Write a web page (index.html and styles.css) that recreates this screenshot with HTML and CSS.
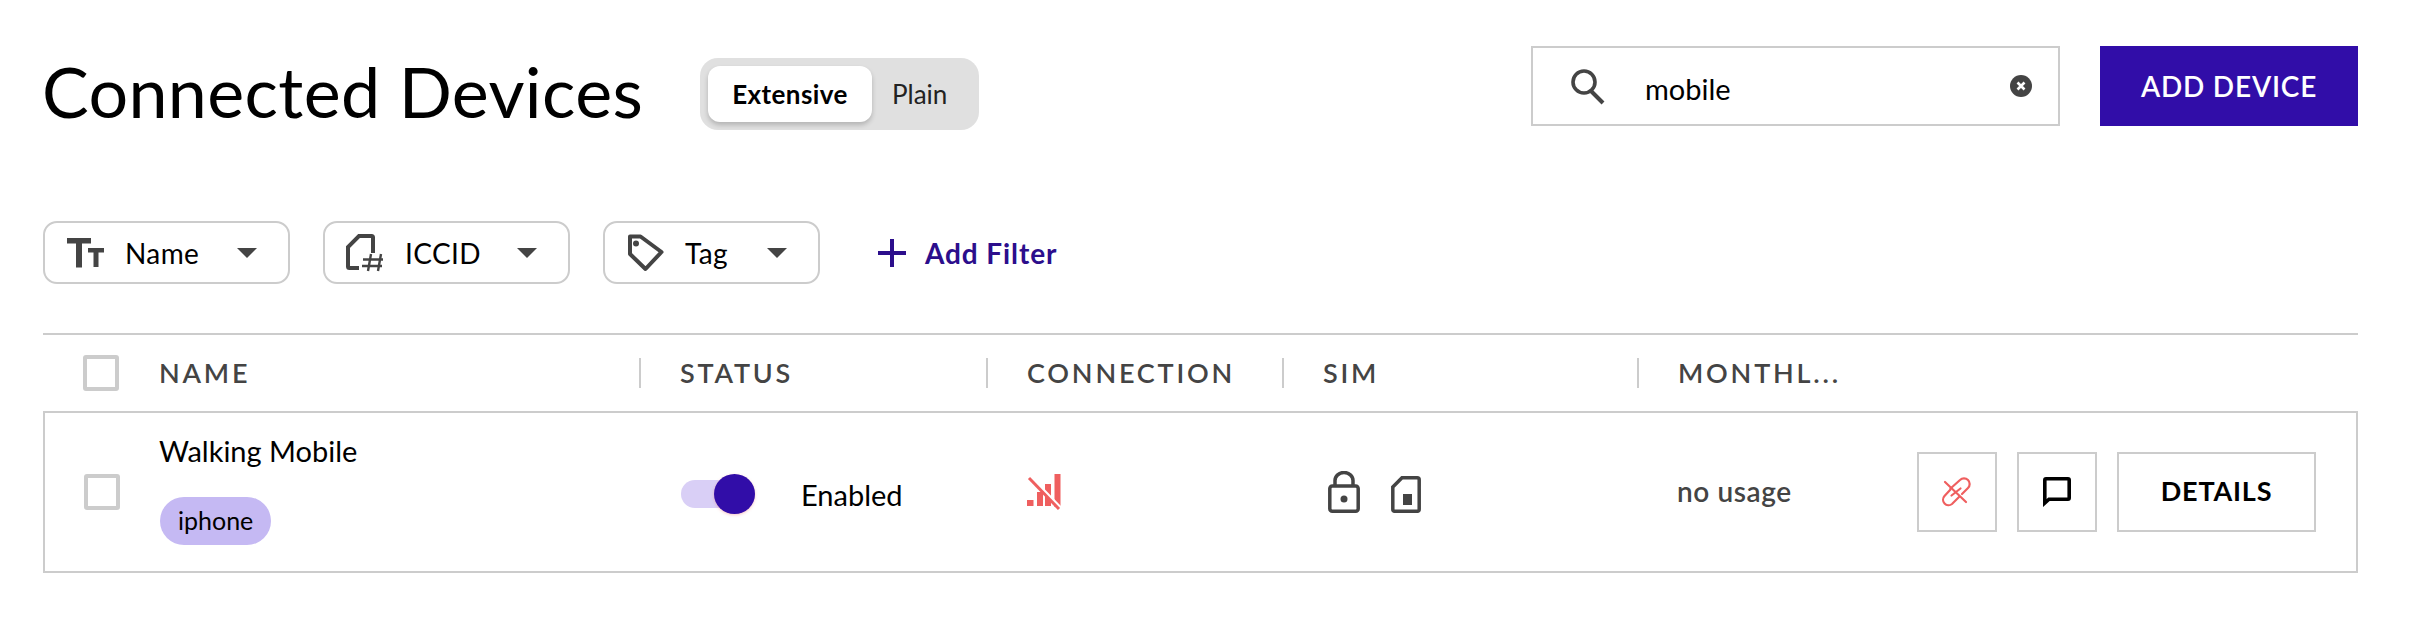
FILE: index.html
```html
<!DOCTYPE html>
<html>
<head>
    <title>Connected Devices</title>
    <link rel="stylesheet" href="styles.css">
</head>
<body>
    <div class="devices">
        <header class="devices-header">
            <h1 class="devices-header__title">Connected Devices</h1>
            <div class="view-switch">
                <span class="view-switch__item view-switch__item--active">Extensive</span>
                <span class="view-switch__item">Plain</span>
            </div>
            <div class="search">
                <svg class="search__icon" width="36" height="36" viewBox="0 0 36 36" fill="none" stroke="#444" stroke-width="3.6">
                    <circle cx="13" cy="13" r="11"/>
                    <path d="M19 21l13 13" stroke-width="4"/>
                </svg>
                <span class="search__value">mobile</span>
                <svg class="search__clear" width="22" height="22" viewBox="0 0 22 22">
                    <circle cx="11" cy="11" r="11" fill="#444"/>
                    <path d="M7.500 7.500l7 7M14.500 7.500l-7 7" stroke="#fff" stroke-width="2.600"/>
                </svg>
            </div>
            <button class="add-device">ADD DEVICE</button>
        </header>

        <div class="filters">
            <div class="filter filter--wide">
                <svg class="filter__icon" width="38" height="30" viewBox="0 0 38 30" fill="#444">
                    <path d="M1 0h24v5.500h-9v24h-6v-24H1z"/>
                    <path d="M22 10h16v4.500h-5.500V29h-5V14.500H22z"/>
                </svg>
                <span class="filter__label">Name</span>
                <span class="filter__caret"></span>
            </div>
            <div class="filter filter--wide">
                <svg class="filter__icon" width="38" height="38" viewBox="0 0 38 38" fill="none" stroke="#444">
                    <path d="M27 19V3.500a1.500 1.500 0 0 0-1.500-1.500H13L2 13v19.500A1.500 1.500 0 0 0 3.500 34H13" stroke-width="4"/>
                    <path d="M22 37l3-17M32 37l3-17M17 25.500h20M16 32h20" stroke-width="2.400"/>
                </svg>
                <span class="filter__label">ICCID</span>
                <span class="filter__caret"></span>
            </div>
            <div class="filter filter--tag">
                <svg class="filter__icon" width="38" height="38" viewBox="0 0 38 38" fill="none" stroke="#444">
                    <path d="M4 2.500h10.500l21 15.500-16 17-15.500-15z" stroke-width="4" stroke-linejoin="round"/>
                    <circle cx="10" cy="9.500" r="3" fill="#444" stroke="none"/>
                </svg>
                <span class="filter__label">Tag</span>
                <span class="filter__caret"></span>
            </div>
            <div class="add-filter">
                <svg width="28" height="28" viewBox="0 0 28 28" fill="#2c0e8c">
                    <path d="M12 0h4v12h12v4H16v12h-4V16H0v-4h12z"/>
                </svg>
                <span class="add-filter__label">Add Filter</span>
            </div>
        </div>

        <div class="table">
            <div class="table__head">
                <div class="table__check-cell"><span class="checkbox"></span></div>
                <div class="table__heading table__heading--first">NAME</div>
                <div class="table__heading">STATUS</div>
                <div class="table__heading">CONNECTION</div>
                <div class="table__heading">SIM</div>
                <div class="table__heading">MONTHL...</div>
            </div>
            <div class="table__row">
                <div class="table__check-cell"><span class="checkbox"></span></div>
                <div class="device-name">
                    <span class="device-name__text">Walking Mobile</span>
                    <span class="device-name__tag">iphone</span>
                </div>
                <div class="device-status">
                    <span class="switch"><span class="switch__knob"></span></span>
                    <span class="device-status__label">Enabled</span>
                </div>
                <div class="device-connection">
                    <svg width="34" height="36" viewBox="0 0 34 36" fill="#ef5f5f">
                        <path d="M0 26h6.500v6H0zM10 18h6v14h-6zM18 10h6v22h-6zM27.500 0h6v33h-6z"/>
                        <path d="M3.500 3l30 31" stroke="#fff" stroke-width="3.500"/>
                        <path d="M2 4l30 31" stroke="#ef5f5f" stroke-width="3"/>
                    </svg>
                </div>
                <div class="device-sim">
                    <svg width="32" height="42" viewBox="0 0 32 42" fill="none" stroke="#444" stroke-width="3.500">
                        <rect x="1.800" y="15" width="28.400" height="25.200" rx="2.500"/>
                        <path d="M7 15V9.500a9 8 0 0 1 18 0V15"/>
                        <circle cx="16" cy="28" r="3.500" fill="#444" stroke="none"/>
                    </svg>
                    <svg width="30" height="37" viewBox="0 0 30 37" fill="none" stroke="#444" stroke-width="3.500">
                        <path d="M11 1.800h15.200a2 2 0 0 1 2 2v29.500a2 2 0 0 1-2 2H3.800a2 2 0 0 1-2-2V11z"/>
                        <rect x="12" y="18" width="9" height="11" fill="#444" stroke="none"/>
                    </svg>
                </div>
                <div class="device-usage">
                    <span class="device-usage__text">no usage</span>
                    <div class="device-actions">
                        <button class="action-button">
                            <svg width="32" height="30" viewBox="0 0 32 30" fill="none" stroke="#ef5f5f" stroke-width="2.200" stroke-linecap="round">
                                <path d="M9.500 11.500L19 3a5.500 5.500 0 0 1 8 8l-6 6"/>
                                <path d="M9.500 12.500L3.500 19a5.500 5.500 0 0 0 7.500 8l7-7"/>
                                <path d="M10.500 18.500l9-7M4 5l21 20"/>
                            </svg>
                        </button>
                        <button class="action-button">
                            <svg width="28" height="30" viewBox="0 0 28 30" fill="none">
                                <path d="M3 1.800h22a1.200 1.200 0 0 1 1.200 1.200v18a1.200 1.200 0 0 1-1.200 1.200H6L1.800 26V3A1.200 1.200 0 0 1 3 1.800z" stroke="#000" stroke-width="3.600"/>
                            </svg>
                        </button>
                        <button class="details-button">DETAILS</button>
                    </div>
                </div>
            </div>
        </div>
    </div>
</body>
</html>
```

FILE: styles.css
```css
* {
    margin: 0;
    padding: 0;
    box-sizing: border-box;
}

body {
    font-family: Lato, "Open Sans", sans-serif;
    background: white;
    color: black;
    height: 100vh;
    overflow: hidden;
}

.devices {
    padding: 46px 52px 0 43px;
}

.devices-header {
    display: flex;
    align-items: center;
    height: 80px;
}

.devices-header__title {
    width: 657px;
    margin: 10px 1px 0 -1px;
    font-size: 70px;
    font-weight: 400;
    line-height: 80px;
    letter-spacing: 0.35px;
    white-space: nowrap;
}

.view-switch {
    display: flex;
    align-items: center;
    width: 279px;
    height: 72px;
    margin-top: 16px;
    padding: 0 8px;
    background: #e0e0e0;
    border-radius: 18px;
}

.view-switch__item {
    font-size: 26px;
    padding-left: 20px;
    color: #222;
}

.view-switch__item--active {
    display: flex;
    align-items: center;
    justify-content: center;
    width: 164px;
    height: 56px;
    padding: 0;
    background: white;
    border-radius: 12px;
    box-shadow: 0 3px 5px rgba(0, 0, 0, 0.2);
    color: black;
    font-weight: 700;
    letter-spacing: 0.4px;
}

.search {
    display: flex;
    align-items: center;
    width: 529px;
    height: 80px;
    margin-left: auto;
    padding: 0 26px 0 38px;
    border: 2px solid #ccc;
}

.search__icon {
    margin-top: 2px;
}

.search__value {
    flex: 1;
    margin-left: 38px;
    font-size: 29px;
    margin-top: 4px;
}

.add-device {
    width: 258px;
    height: 80px;
    margin-left: 40px;
    background: #310da8;
    border: none;
    color: white;
    font-family: inherit;
    font-size: 28px;
    font-weight: 600;
    letter-spacing: 0.8px;
}

.filters {
    display: flex;
    align-items: center;
    gap: 33px;
    margin-top: 95px;
}

.filter {
    display: flex;
    align-items: center;
    width: 247px;
    height: 63px;
    padding: 0 31px 0 21px;
    border: 2px solid #ccc;
    border-radius: 14px;
}

.filter--tag {
    width: 217px;
}

.filter__icon {
    flex: none;
}

.filter__label {
    flex: 1;
    margin-left: 21px;
    font-size: 28px;
    letter-spacing: 0.4px;
    white-space: nowrap;
}

.filter__caret {
    flex: none;
    width: 0;
    height: 0;
    border-left: 10px solid transparent;
    border-right: 10px solid transparent;
    border-top: 10px solid #444;
}

.add-filter {
    display: flex;
    align-items: center;
    gap: 19px;
    margin-left: 25px;
}

.add-filter__label {
    color: #2c0e8c;
    font-size: 28px;
    font-weight: 700;
    letter-spacing: 0.9px;
    white-space: nowrap;
}

.table {
    margin-top: 49px;
    border-top: 2px solid #ccc;
}

.table__head,
.table__row {
    display: grid;
    grid-template-columns: 116px 480px 347px 296px 355px 1fr;
    align-items: center;
}

.table__head {
    height: 76px;
}

.table__row {
    grid-template-columns: 115px 480px 347px 296px 355px 1fr;
    height: 162px;
    border: 2px solid #ccc;
}

.table__check-cell {
    padding-left: 40px;
}

.table__row .table__check-cell {
    padding-left: 39px;
}

.checkbox {
    display: block;
    width: 36px;
    height: 36px;
    border: 4px solid #ccc;
    border-radius: 3px;
}

.table__heading {
    height: 30px;
    padding-left: 39px;
    border-left: 2px solid #ccc;
    color: #444;
    font-size: 27px;
    font-weight: 600;
    line-height: 30px;
    letter-spacing: 2.8px;
    white-space: nowrap;
}

.table__heading--first {
    padding-left: 0;
    border-left: none;
}

.device-name {
    display: flex;
    flex-direction: column;
    align-items: flex-start;
    gap: 34px;
}

.device-name__text {
    font-size: 29px;
    line-height: 24px;
    margin-left: -1px;
}

.device-name__tag {
    display: flex;
    align-items: center;
    height: 48px;
    padding: 0 18px 2px;
    background: #c5b9f3;
    border-radius: 24px;
    font-size: 25px;
}

.device-status {
    display: flex;
    align-items: center;
    gap: 46px;
    padding-left: 41px;
}

.switch {
    display: block;
    position: relative;
    width: 74px;
    height: 28px;
    margin-top: 4px;
    background: #d9cff6;
    border-radius: 14px;
}

.switch__knob {
    position: absolute;
    top: -6px;
    right: 0;
    width: 41px;
    height: 40px;
    background: #310da8;
    border-radius: 50%;
    box-shadow: 0 1px 3px rgba(239, 95, 95, 0.35);
}

.device-status__label {
    margin-top: 5px;
    font-size: 29px;
}

.device-connection {
    padding-left: 40px;
}

.device-connection svg {
    display: block;
}

.device-sim {
    display: flex;
    align-items: flex-end;
    gap: 31px;
    padding-left: 45px;
}

.device-usage {
    display: flex;
    align-items: center;
    justify-content: space-between;
    padding: 0 40px 0 39px;
}

.device-usage__text {
    margin-top: -2px;
    color: #444;
    font-size: 28px;
    font-weight: 600;
    letter-spacing: 0.6px;
}

.device-actions {
    display: flex;
    gap: 20px;
}

.action-button {
    display: flex;
    align-items: center;
    justify-content: center;
    width: 80px;
    height: 80px;
    background: white;
    border: 2px solid #ccc;
}

.details-button {
    width: 199px;
    height: 80px;
    padding-bottom: 4px;
    background: white;
    border: 2px solid #ccc;
    color: black;
    font-family: inherit;
    font-size: 27px;
    font-weight: 700;
    letter-spacing: 0.8px;
}
```
